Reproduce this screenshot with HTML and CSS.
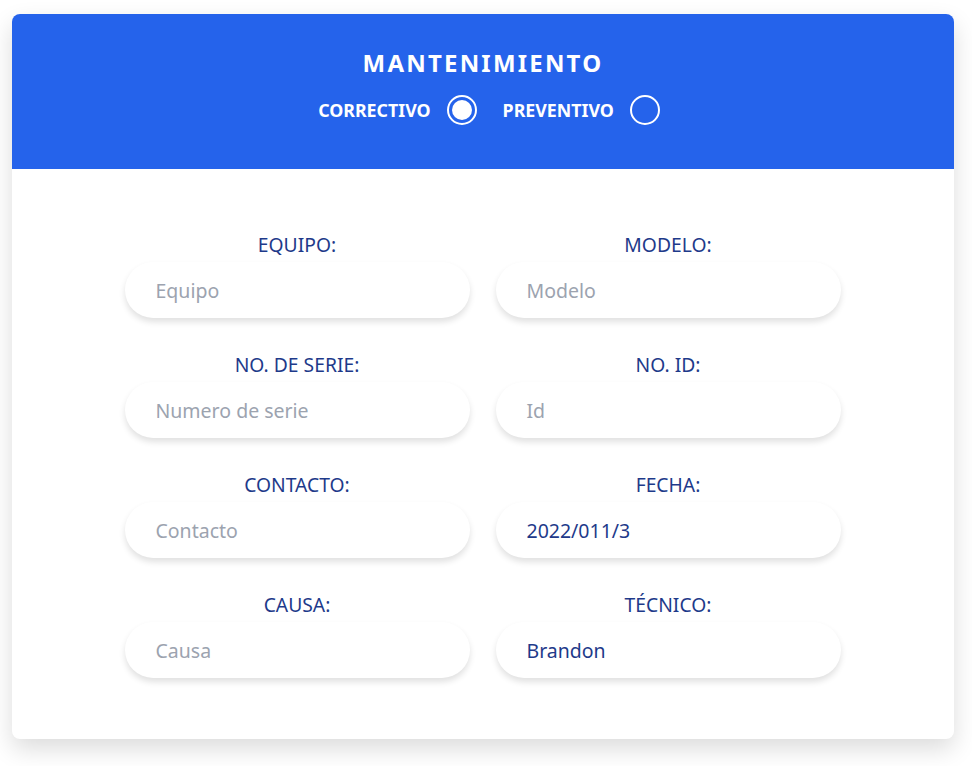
FILE: index.html
```html
<!DOCTYPE html>
<html lang="es">
<head>
<meta charset="utf-8">
<link rel="stylesheet" href="styles.css">
</head>
<body>
<div class="card">
  <div class="header">
    <h1 class="title">MANTENIMIENTO</h1>
    <div class="radios">
      <label class="radio-group"><span class="radio-label">CORRECTIVO</span><span class="radio checked"><span class="dot"></span></span></label>
      <label class="radio-group"><span class="radio-label">PREVENTIVO</span><span class="radio"></span></label>
    </div>
  </div>
  <div class="body">
    <div class="grid">
      <div class="field"><div class="label">EQUIPO:</div><div class="input placeholder">Equipo</div></div>
      <div class="field"><div class="label">MODELO:</div><div class="input placeholder">Modelo</div></div>
      <div class="field"><div class="label">NO. DE SERIE:</div><div class="input placeholder">Numero de serie</div></div>
      <div class="field"><div class="label">NO. ID:</div><div class="input placeholder">Id</div></div>
      <div class="field"><div class="label">CONTACTO:</div><div class="input placeholder">Contacto</div></div>
      <div class="field"><div class="label">FECHA:</div><div class="input value">2022/011/3</div></div>
      <div class="field"><div class="label">CAUSA:</div><div class="input placeholder">Causa</div></div>
      <div class="field"><div class="label">TÉCNICO:</div><div class="input value">Brandon</div></div>
    </div>
  </div>
</div>
</body>
</html>
```
FILE: styles.css
```css
html, body {
  margin: 0;
  padding: 0;
  background: #ffffff;
  font-family: "Noto Sans", "Open Sans", "Liberation Sans", sans-serif;
}
body {
  min-height: 100vh;
  padding-top: 14px;
  padding-bottom: 40px;
  box-sizing: border-box;
}
.card {
  width: 942px;
  margin: 0 0 0 12px;
  border-radius: 8px;
  background: #ffffff;
  box-shadow: 0 10px 25px rgba(0, 0, 0, 0.14);
  overflow: hidden;
}
.header {
  background: #2563eb;
  height: 155px;
  box-sizing: border-box;
  padding-top: 33px;
  display: flex;
  flex-direction: column;
  align-items: center;
}
.title {
  margin: 0;
  color: #ffffff;
  font-size: 24px;
  line-height: 32px;
  font-weight: 700;
  letter-spacing: 2.2px;
}
.radios {
  margin-top: 16px;
  margin-left: 12px;
  display: flex;
  align-items: center;
  gap: 26px;
}
.radio-group {
  display: flex;
  align-items: center;
  gap: 16px;
}
.radio-label {
  color: #ffffff;
  font-size: 17.8px;
  font-weight: 700;
  line-height: 30px;
}
.radio {
  width: 30px;
  height: 30px;
  box-sizing: border-box;
  border: 2px solid #ffffff;
  border-radius: 50%;
  display: flex;
  align-items: center;
  justify-content: center;
}
.dot {
  width: 20px;
  height: 20px;
  border-radius: 50%;
  background: #ffffff;
}
.body {
  padding: 64px 0 61px;
  display: flex;
  justify-content: center;
}
.grid {
  display: grid;
  grid-template-columns: 345px 345px;
  column-gap: 26px;
  row-gap: 35px;
  margin-left: -1px;
}
.field {
  display: flex;
  flex-direction: column;
}
.label {
  text-align: center;
  color: #1e3a8a;
  font-size: 19.3px;
  line-height: 24px;
  margin-bottom: 5px;
}
.input {
  height: 56px;
  box-sizing: border-box;
  border-radius: 28px;
  background: #ffffff;
  box-shadow: 0 4px 6px rgba(0, 0, 0, 0.12);
  padding: 0 31px;
  display: flex;
  align-items: center;
  font-size: 19.5px;
}
.placeholder {
  color: #9ca3af;
}
.value {
  color: #1e3a8a;
}
```
